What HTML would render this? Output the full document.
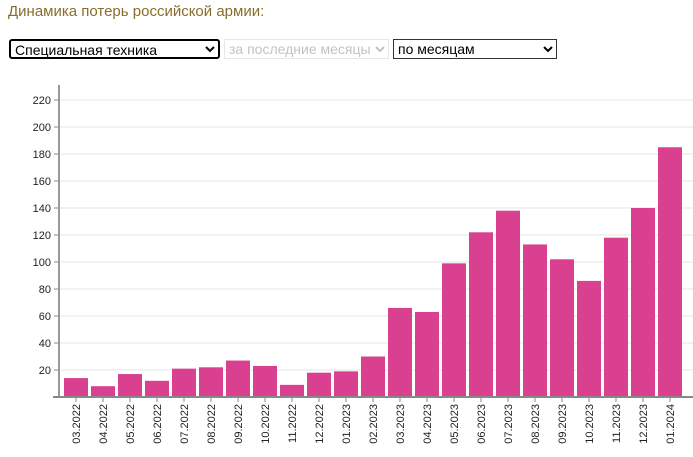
<!DOCTYPE html>
<html><head><meta charset="utf-8"><style>
body{margin:0;background:#fff;font-family:"Liberation Sans",Arial,sans-serif;}
.t{position:absolute;left:8px;top:3px;font-size:15px;color:#8a6d2a;}
select{position:absolute;top:39px;height:20px;font-family:"Liberation Sans",Arial,sans-serif;font-size:14px;background:#fff;}
</style></head><body>
<div class="t">Динамика потерь российской армии:</div>
<select style="left:9px;width:211px;border:2px solid #000;border-radius:3px"><option>Специальная техника</option></select>
<select style="left:224px;width:165px;color:#aaa;border:1px solid #ddd" disabled><option>за последние месяцы</option></select>
<select style="left:393px;width:164px;border:1px solid #333"><option>по месяцам</option></select>
<svg style="position:absolute;left:0;top:0" width="693" height="457" font-family="Liberation Sans,Arial,sans-serif" font-size="11">
<g id="g"></g>
</svg>
<script>
var g=document.getElementById('g'),s='';
for(var v=20;v<=220;v+=20){var y=397-v*1.35;s+='<line x1="59" x2="693" y1="'+y+'" y2="'+y+'" stroke="#e6e6e6"/><line x1="54" x2="59" y1="'+y+'" y2="'+y+'" stroke="#888"/><text x="51" y="'+(y+4)+'" text-anchor="end" fill="#222">'+v+'</text>';}
var vals=[14,8,17,12,21,22,27,23,9,18,19,30,66,63,99,122,138,113,102,86,118,140,185];
var labs=['03.2022','04.2022','05.2022','06.2022','07.2022','08.2022','09.2022','10.2022','11.2022','12.2022','01.2023','02.2023','03.2023','04.2023','05.2023','06.2023','07.2023','08.2023','09.2023','10.2023','11.2023','12.2023','01.2024'];
for(var i=0;i<23;i++){var x=64+i*27,h=vals[i]*1.35,c=x+12;
s+='<rect x="'+x+'" y="'+(397-h)+'" width="24" height="'+h+'" fill="#d94090"/>';
s+='<line x1="'+c+'" x2="'+c+'" y1="397" y2="402" stroke="#888"/>';
s+='<text transform="translate('+(c+4)+',404) rotate(-90)" text-anchor="end" fill="#222">'+labs[i]+'</text>';}
s+='<line x1="59" x2="59" y1="85" y2="398" stroke="#999" stroke-width="2"/><line x1="53" x2="693" y1="397" y2="397" stroke="#888" stroke-width="2"/>';
g.innerHTML=s;
</script>
</body></html>
